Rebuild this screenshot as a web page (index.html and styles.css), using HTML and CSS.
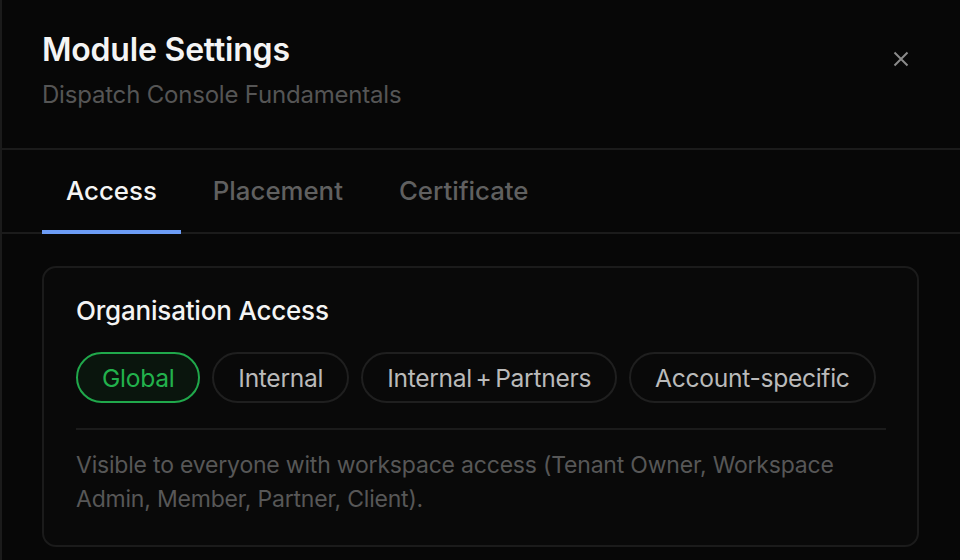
FILE: index.html
```html
<!DOCTYPE html>
<html lang="en">
<head>
<meta charset="utf-8">
<title>Module Settings</title>
<link rel="stylesheet" href="styles.css">
</head>
<body>
<div class="modal">
  <header class="modal-header">
    <div class="titles">
      <h1 class="title">Module Settings</h1>
      <p class="subtitle">Dispatch Console Fundamentals</p>
    </div>
    <button class="close" aria-label="Close">
      <svg width="16" height="16" viewBox="0 0 16 16"><path d="M1.5 1.5L14.5 14.5M14.5 1.5L1.5 14.5" stroke="#8a8a8a" stroke-width="2" stroke-linecap="butt"/></svg>
    </button>
  </header>
  <nav class="tabs">
    <div class="tab active">Access</div>
    <div class="tab">Placement</div>
    <div class="tab">Certificate</div>
  </nav>
  <section class="content">
    <div class="card">
      <h2 class="card-title">Organisation Access</h2>
      <div class="pills">
        <span class="pill selected">Global</span>
        <span class="pill">Internal</span>
        <span class="pill">Internal + Partners</span>
        <span class="pill">Account-specific</span>
      </div>
      <div class="divider"></div>
      <p class="desc">Visible to everyone with workspace access (Tenant Owner, Workspace Admin, Member, Partner, Client).</p>
    </div>
  </section>
</div>
</body>
</html>
```
FILE: styles.css
```css
* { box-sizing: border-box; }
html, body { margin: 0; padding: 0; }
body {
  background: #070707;
  font-family: "Inter", "Noto Sans", sans-serif;
  color: #f2f2f2;
  width: 960px;
  height: 560px;
  overflow: hidden;
}
.modal {
  border-left: 2px solid #1b1b1b;
  height: 560px;
}
.modal-header {
  display: flex;
  justify-content: space-between;
  align-items: flex-start;
  padding: 30px 51px 0 40px;
  height: 150px;
  border-bottom: 2px solid #1b1b1b;
}
.title {
  margin: 0;
  font-size: 32px;
  line-height: 40px;
  font-weight: 600;
  color: #f4f4f4;
  letter-spacing: -0.2px;
}
.subtitle {
  margin: 9px 0 0;
  font-size: 24px;
  line-height: 32px;
  color: #555;
  letter-spacing: -0.2px;
}
.close {
  background: none;
  border: 0;
  padding: 0;
  margin-top: 21px;
  width: 16px;
  height: 16px;
  display: flex;
}
.tabs {
  display: flex;
  gap: 8px;
  padding: 0 40px;
  height: 84px;
  border-bottom: 2px solid #1b1b1b;
}
.tab {
  padding: 0 24px;
  font-size: 25.8px;
  font-weight: 500;
  color: #606060;
  display: flex;
  align-items: center;
  height: 84px;
  border-bottom: 4px solid transparent;
  white-space: nowrap;
}
.tab.active {
  color: #f5f5f5;
  border-bottom-color: #6c9cf5;
}
.content {
  padding: 32px 41px 0 40px;
}
.card {
  border: 2px solid #1b1b1b;
  border-radius: 14px;
  background: #090909;
  padding: 26px 31px 0 32px;
  height: 281px;
}
.card-title {
  margin: 0;
  font-size: 26px;
  line-height: 34px;
  font-weight: 500;
  color: #f4f4f4;
  letter-spacing: -0.2px;
}
.pills {
  display: flex;
  gap: 12px;
  margin-top: 24px;
}
.pill {
  flex: 0 0 auto;
  white-space: nowrap;
  height: 51px;
  padding: 0 24px;
  border: 2px solid #1f1f1f;
  border-radius: 26px;
  display: flex;
  align-items: center;
  font-size: 24.6px;
  color: #bababa;
  letter-spacing: -0.3px;
  word-spacing: -3px;
}
.pill.selected {
  border-color: #20a84b;
  background: #0a150d;
  color: #22b14c;
}
.divider {
  height: 2px;
  background: #1b1b1b;
  margin-top: 25px;
}
.desc {
  margin: 18px 0 0;
  font-size: 23px;
  line-height: 34px;
  color: #575757;
  letter-spacing: -0.2px;
}
```
